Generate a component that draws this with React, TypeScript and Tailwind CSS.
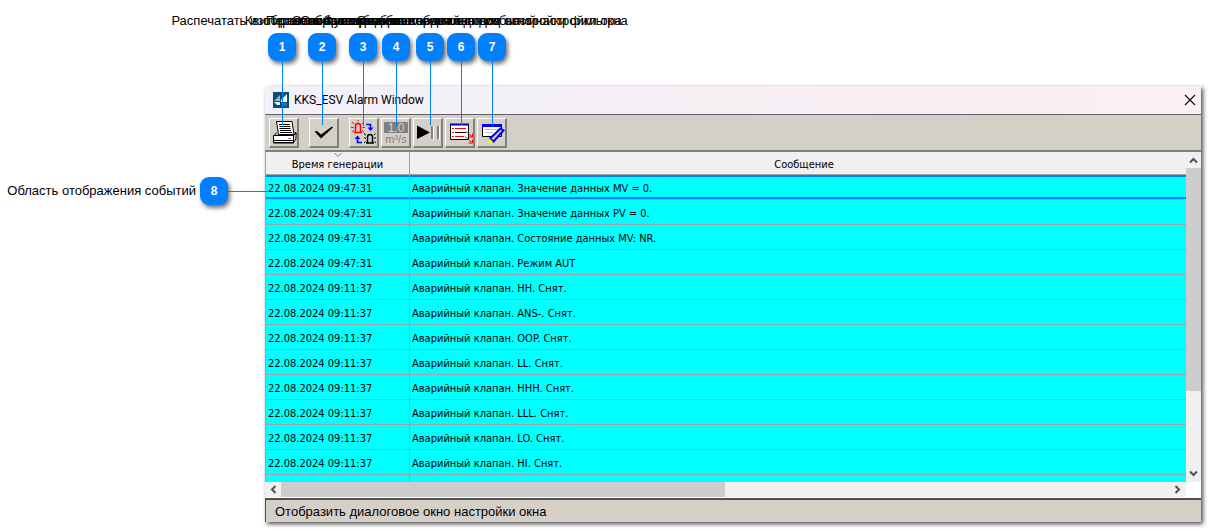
import type { ReactNode } from 'react';
import clsx from 'clsx';

const callouts = [
  { id: 1, text: 'Распечатать изображение на экране', left: 'left-[268px]', line: 'h-16' },
  { id: 2, text: 'Квитировать все события', left: 'left-[308px]', line: 'h-16' },
  { id: 3, text: 'Переключение режима событий', left: 'left-[349px]', line: 'h-[65px]' },
  { id: 4, text: 'Отображение инженерных единиц', left: 'left-[382px]', line: 'h-[65px]' },
  { id: 5, text: 'Функция обновления окна событий', left: 'left-[416px]', line: 'h-16' },
  { id: 6, text: 'Отобразить диалоговое окно для настройки фильтра', left: 'left-[447px]', line: 'h-16' },
  { id: 7, text: 'Отобразить диалоговое окно настройки окна', left: 'left-[478px]', line: 'h-16' },
];

const events = [
  { time: '22.08.2024 09:47:31', message: 'Аварийный клапан. Значение данных MV = 0.' },
  { time: '22.08.2024 09:47:31', message: 'Аварийный клапан. Значение данных PV = 0.' },
  { time: '22.08.2024 09:47:31', message: 'Аварийный клапан. Состояние данных MV: NR.' },
  { time: '22.08.2024 09:47:31', message: 'Аварийный клапан. Режим AUT' },
  { time: '22.08.2024 09:11:37', message: 'Аварийный клапан. HH. Снят.' },
  { time: '22.08.2024 09:11:37', message: 'Аварийный клапан. ANS-. Снят.' },
  { time: '22.08.2024 09:11:37', message: 'Аварийный клапан. OOP. Снят.' },
  { time: '22.08.2024 09:11:37', message: 'Аварийный клапан. LL. Снят.' },
  { time: '22.08.2024 09:11:37', message: 'Аварийный клапан. HHH. Снят.' },
  { time: '22.08.2024 09:11:37', message: 'Аварийный клапан. LLL. Снят.' },
  { time: '22.08.2024 09:11:37', message: 'Аварийный клапан. LO. Снят.' },
  { time: '22.08.2024 09:11:37', message: 'Аварийный клапан. HI. Снят.' },
  { time: '', message: '' },
];

function Badge({ children }: { children: ReactNode }) {
  return (
    <span className="flex size-7 shrink-0 items-center justify-center rounded-[9px] bg-[#0080ff] text-[12px] font-bold text-white shadow-[2px_3px_4px_rgba(0,0,0,0.55)]">
      {children}
    </span>
  );
}

function ToolButton({ label, children }: { label: string; children: ReactNode }) {
  return (
    <button
      type="button"
      aria-label={label}
      className="h-[30px] w-[30px] shrink-0 border-t border-r-2 border-b-2 border-l border-t-white border-r-[#808080] border-b-[#808080] border-l-white bg-[#d4d0c8]"
    >
      <svg viewBox="1 1 27 27" className="size-[27px]" fill="none">
        {children}
      </svg>
    </button>
  );
}

function PrintIcon() {
  return (
    <>
      <path d="M7.5 3.5H23L25 16.5H9.5Z" fill="#fff" stroke="#000" />
      <path d="M10 6.500h11M10.500 8.500h11M10.500 10.500h11M11 12.500h11M11 14.500h12" stroke="#000" />
      <path d="M7.500 14.500 5.500 17.500M25.500 14.500h1.500v2" stroke="#000" />
      <path d="M4.500 17.500H24.500V24.500H4.500Z" fill="#fff" stroke="#000" />
      <path d="M24.500 17.500 27 15V21L24.500 24.500Z" fill="#d4d0c8" stroke="#000" />
      <path d="M5 22.500H24.500" stroke="#000" />
      <path d="M4.500 25H25" stroke="#000" />
      <path d="M19 20.500h3" stroke="#808080" />
    </>
  );
}

function CheckIcon() {
  return <path d="M5.500 13.500 8 13 12 16.500 23 8.500 24 9.500 12 20.500Z" fill="#000" />;
}

function LampsIcon() {
  return (
    <>
      <path d="M6.500 14.500V8q0-2.500 2.500-2.500T11.500 8v6.500M5 14.500h8" stroke="#f00" strokeWidth="1.500" />
      <path d="M3 4 5 6M2 9.500h2.500M3 14l2-1.500M9 2v1.500M15 4l-2 2M13.500 9.500H16M15 14l-2-1.500" stroke="#f00" />
      <path d="M17 6.500h4.500V10" stroke="#00f" strokeWidth="1.600" />
      <path d="M18.500 9.500h6l-3 3.500Z" fill="#00f" />
      <path d="M8.500 20v4.500H13" stroke="#00f" strokeWidth="1.600" />
      <path d="M5.500 21h6l-3-3.500Z" fill="#00f" />
      <path d="M18.500 24.500V19q0-2.500 2.500-2.500t2.500 2.500v5.500M17 25h8" stroke="#000" strokeWidth="1.500" />
      <path d="M15 15.500 17 17M15 20h2M15 25l1.500-1.500M26.500 15.500 25 17M25 20h2M27 25l-1.500-1.500" stroke="#000" />
    </>
  );
}

function UnitIcon() {
  return (
    <>
      <path d="M3 4H27V15H3Z" fill="#808080" />
      <text x="15" y="14" textAnchor="middle" fontFamily="Liberation Sans" fontSize="12" fill="#d4d0c8">1.0</text>
      <text x="15" y="25" textAnchor="middle" fontFamily="Liberation Sans" fontSize="11" fill="#808080">m³/s</text>
    </>
  );
}

function PlayPauseIcon() {
  return (
    <>
      <path d="M4 7.500 17 14.500 4 21Z" fill="#000" />
      <path d="M18 8h2v13h-2zM24 8h2v13h-2z" fill="#808080" />
      <path d="M20.500 8v13.500M26.500 8v13.500" stroke="#fff" />
    </>
  );
}

function FilterIcon() {
  return (
    <>
      <path d="M5.500 6.500H23.500V21.500H5.500Z" fill="#fff" stroke="#000" />
      <path d="M5 6.500H24" stroke="#0000c0" strokeWidth="2" />
      <path d="M7 10.500h2M7 14.500h2M7 18.500h2" stroke="#f00" />
      <path d="M10 10.500h11M10 18.500h9" stroke="#f00" />
      <path d="M10 14.500h11" stroke="#000" />
      <path d="M21 13.500 27 18.500M27.500 15.500v3.500h-4M20 18.500l7 6M27.500 21.500v3.500h-4" stroke="#f00" />
    </>
  );
}

function SettingsIcon() {
  return (
    <>
      <path d="M5.500 7.500H24.500V18.500H5.500Z" fill="#fff" stroke="#000" />
      <path d="M5 7.500H25" stroke="#00f" strokeWidth="3" />
      <path d="M8 11.500h13M8 14.500h8" stroke="#c0c0c0" />
      <path d="M13 20.500 23.500 10.500 26.500 12.500 16.500 23.500Z" fill="#d4d0c8" stroke="#00f" strokeWidth="2" />
      <path d="M12 20 16 24 11 26Z" fill="#ff0" />
    </>
  );
}

function Arrow({ label, d, className }: { label: string; d: string; className: string }) {
  return (
    <button type="button" aria-label={label} className={clsx('flex shrink-0 items-center justify-center', className)}>
      <svg viewBox="0 0 9 9" className="size-[9px]" fill="none" stroke="#505050" strokeWidth="2">
        <path d={d} />
      </svg>
    </button>
  );
}

export default function App() {
  return (
    <div className="relative flex min-h-screen items-start bg-white pt-[86px] pr-[9px] font-['Liberation_Sans',sans-serif] text-[13px] text-black">
      <aside className="mt-[91px] flex w-[265px] shrink-0 items-center justify-end">
        <span className="pr-1 whitespace-nowrap">Область отображения событий</span>
        <Badge>8</Badge>
        <span className="z-10 -mr-1 h-px w-[41px] bg-[#0080ff]" />
      </aside>

      <main className="min-w-0 flex-1 rounded-tl-sm bg-white shadow-[2px_2px_4px_rgba(0,0,0,0.7)]">
        <header className="flex h-7 items-center rounded-tl-sm bg-linear-to-r from-[#f2f1f9] to-[#fbeff2] pr-[5px] pl-2 font-['Roboto',sans-serif] text-[12px]">
          <svg viewBox="0 0 16 16" className="size-4">
            <path d="M0 0H16V16H0Z" fill="#0b4f79" />
            <path d="M7 3V9H1Z" fill="#7fbcd6" />
            <path d="M8 8 14 2V10H8Z" fill="#fff" />
            <path d="M1 10H7V13H4Z" fill="#e8f4f8" />
            <path d="M8 11H14V15Z" fill="#1a7fa8" />
          </svg>
          <h1 className="pl-[5px]">KKS_ESV Alarm Window</h1>
          <button type="button" aria-label="Закрыть" className="ml-auto">
            <svg viewBox="0 0 12 12" className="size-3" fill="none" stroke="#111" strokeWidth="1.200">
              <path d="M1 1 11 11M11 1 1 11" />
            </svg>
          </button>
        </header>

        <div className="flex h-[38px] items-center gap-[2px] border-t border-b-2 border-t-[#606060] border-b-[#808080] bg-[#d4d0c8] px-1">
          <ToolButton label="Печать"><PrintIcon /></ToolButton>
          <div className="flex px-2">
            <ToolButton label="Квитировать"><CheckIcon /></ToolButton>
          </div>
          <ToolButton label="Режим"><LampsIcon /></ToolButton>
          <ToolButton label="Единицы"><UnitIcon /></ToolButton>
          <ToolButton label="Пауза"><PlayPauseIcon /></ToolButton>
          <ToolButton label="Фильтр"><FilterIcon /></ToolButton>
          <ToolButton label="Настройка"><SettingsIcon /></ToolButton>
        </div>

        <div className="flex h-[330px] bg-[#f0f0f0] font-['DejaVu_Sans_Condensed',sans-serif] text-[11px]">
          <div className="min-w-0 flex-1 overflow-hidden border-l border-[#a0a0a0]">
            <table className="w-full table-fixed border-separate border-spacing-0">
              <colgroup>
                <col className="w-36" />
                <col />
              </colgroup>
              <thead>
                <tr className="h-[23px] leading-4">
                  <th className="relative border-r border-b border-[#a0a0a0] p-0 pt-[3px] font-normal">
                    <svg viewBox="0 0 8 4" className="absolute top-px left-[68px] h-1 w-2" fill="none" stroke="#808080">
                      <path d="M.5 0 4 3.500 7.500 0" />
                    </svg>
                    Время генерации
                  </th>
                  <th className="border-b border-[#a0a0a0] p-0 pt-[3px] pl-3 font-normal">Сообщение</th>
                </tr>
              </thead>
              <tbody>
                {events.map((event, i) => (
                  <tr
                    key={i}
                    className={clsx(
                      'h-[25px] bg-[#00ffff] leading-4',
                      i === 0 && 'shadow-[inset_0_2px_#0080ff,inset_0_-1px_#a0a0a0,inset_0_-3px_#0080ff]'
                    )}
                  >
                    <td className="border-r border-b border-[#a0a0a0] pt-[3px] pb-0 pl-[2px] whitespace-nowrap">{event.time}</td>
                    <td className="border-b border-[#a0a0a0] pt-[3px] pb-0 pl-[2px] whitespace-nowrap">{event.message}</td>
                  </tr>
                ))}
              </tbody>
            </table>
          </div>
          <div className="flex w-[15px] flex-col">
            <Arrow label="Вверх" d="M1 6.500 4.500 3 8 6.500" className="h-4" />
            <div className="h-[223px] bg-[#cdcdcd]" />
            <Arrow label="Вниз" d="M1 2.500 4.500 6 8 2.500" className="mt-auto h-[18px]" />
          </div>
        </div>

        <div className="flex h-[15px] pr-[15px]">
          <Arrow label="Влево" d="M6.500 1 3 4.500 6.500 8" className="w-4 bg-[#f0f0f0]" />
          <div className="flex-1 bg-[#f0f0f0]">
            <div className="h-full w-1/2 bg-[#cdcdcd]" />
          </div>
          <Arrow label="Вправо" d="M2.500 1 6 4.500 2.500 8" className="w-[18px] bg-[#f0f0f0]" />
        </div>

        <footer className="mt-px flex h-6 items-center border-t-2 border-l border-[#505050] bg-[#d4d0c8] pt-[2px] pl-[9px]">
          Отобразить диалоговое окно настройки окна
        </footer>
      </main>

      {callouts.map((callout) => (
        <div key={callout.id} className={clsx('absolute top-[11px] flex w-7 flex-col items-center', callout.left)}>
          <span className="h-[22px] leading-5 whitespace-nowrap">{callout.text}</span>
          <Badge>{callout.id}</Badge>
          <span className={clsx('w-px bg-[#0080ff]', callout.line)} />
        </div>
      ))}
    </div>
  );
}
